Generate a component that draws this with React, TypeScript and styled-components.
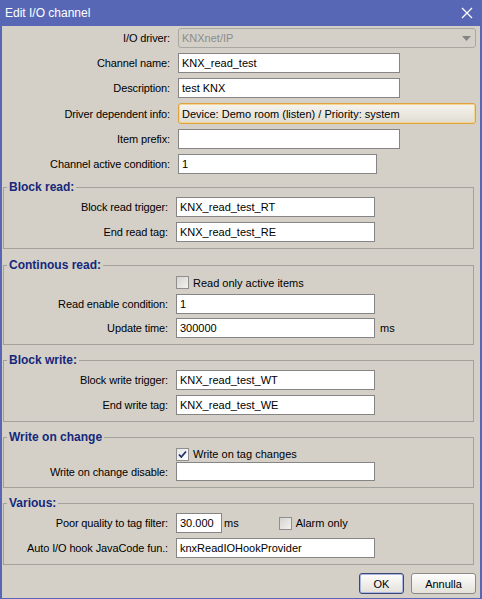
import React from "react";
import styled, { createGlobalStyle } from "styled-components";

const GlobalStyle = createGlobalStyle`
  html, body {
    margin: 0;
    padding: 0;
  }
  body {
    font-family: "Liberation Sans", Arial, sans-serif;
    font-size: 11px;
    color: #000;
    background: #d4d0c8;
  }
`;

const Window = styled.div`
  width: 482px;
  height: 599px;
  box-sizing: border-box;
  padding: 0 2px 2px 2px;
  background: #5767b5;
  display: flex;
  flex-direction: column;
`;

const TitleBar = styled.div`
  height: 25px;
  flex-shrink: 0;
  display: flex;
  align-items: center;
  padding: 0 7px 1px 3px;
  color: #fff;
  font-size: 12px;
`;

const Title = styled.span`
  flex: 1;
`;

const CloseButton = styled.button`
  width: 12px;
  height: 12px;
  padding: 0;
  border: none;
  background: none;
  display: flex;
  cursor: pointer;
`;

const Body = styled.div`
  flex: 1;
  background: #d4d0c8;
  padding: 2px 4px 4px 0;
  display: flex;
  flex-direction: column;
`;

const Stack = styled.div<{ $gap?: number }>`
  display: flex;
  flex-direction: column;
  gap: ${(p) => p.$gap ?? 5}px;
`;

const Row = styled.div<{ $h?: number }>`
  display: flex;
  align-items: center;
  height: ${(p) => p.$h ?? 20}px;
`;

const Label = styled.label<{ $w: number }>`
  width: ${(p) => p.$w}px;
  flex-shrink: 0;
  box-sizing: border-box;
  padding-right: 8px;
  text-align: right;
  white-space: nowrap;
  letter-spacing: -0.12px;
`;

const TextInput = styled.input<{ $w?: number; $h?: number }>`
  box-sizing: border-box;
  width: ${(p) => (p.$w ? `${p.$w}px` : "auto")};
  height: ${(p) => p.$h ?? 20}px;
  margin: 0;
  padding: 0 3px;
  border: 1px solid #858585;
  background: #fff;
  font-family: inherit;
  font-size: 11px;
  color: #000;
  outline: none;
`;

const Combo = styled.div`
  flex: 1;
  height: 20px;
  box-sizing: border-box;
  display: flex;
  align-items: center;
  padding: 0 4px 0 3px;
  border: 1px solid #a9a7a2;
  border-radius: 3px;
  color: #8c8c8c;
`;

const ComboText = styled.span`
  flex: 1;
`;

const InfoButton = styled.button`
  flex: 1;
  height: 21px;
  box-sizing: border-box;
  margin: 0;
  padding: 0 3px;
  text-align: left;
  font-family: inherit;
  font-size: 11px;
  color: #000;
  border: 1px solid #e0a23f;
  border-radius: 3px;
  background: linear-gradient(#f6f4ee, #e0dcd1);
  box-shadow: inset 0 0 0 1px #f5d592;
`;

const Group = styled.fieldset<{ $mt?: number }>`
  margin: ${(p) => p.$mt ?? 8}px 2px 0 1px;
  padding: 3px 0 6px 0;
  border: 1px solid #a3a19c;
  min-width: 0;
`;

const Legend = styled.legend`
  margin-left: 3px;
  padding: 0 2px;
  font-size: 12px;
  line-height: 14px;
  font-weight: bold;
  color: #15287c;
`;

const Unit = styled.span<{ $ml: number }>`
  margin-left: ${(p) => p.$ml}px;
`;

const CheckLabel = styled.label<{ $ml?: number }>`
  display: flex;
  align-items: center;
  gap: 4px;
  margin-left: ${(p) => p.$ml ?? 0}px;
`;

const CheckBox = styled.span<{ $checked?: boolean }>`
  width: 13px;
  height: 13px;
  box-sizing: border-box;
  border: 1px solid #8f8f8f;
  display: flex;
  align-items: center;
  justify-content: center;
  background: ${(p) =>
    p.$checked
      ? "linear-gradient(135deg, #e6e6e6, #ffffff)"
      : "linear-gradient(135deg, #d6d4cf, #f3f2ef)"};
`;

const ButtonBar = styled.div`
  margin-top: 8px;
  display: flex;
  justify-content: flex-end;
  gap: 7px;
`;

const DialogButton = styled.button<{ $w: number; $default?: boolean }>`
  width: ${(p) => p.$w}px;
  height: 21px;
  box-sizing: border-box;
  margin: 0;
  padding: 0;
  font-family: inherit;
  font-size: 11px;
  color: #000;
  border: 1px solid ${(p) => (p.$default ? "#3b4774" : "#8a8984")};
  border-radius: 3px;
  background: linear-gradient(#fdfdfc, #e4e1da);
  box-shadow: ${(p) => (p.$default ? "inset 0 0 0 1px #a9b6e0" : "none")};
`;

const TOP_W = 176;
const IN_W = 172;

function Check({ checked }: { checked?: boolean }) {
  return (
    <CheckBox $checked={checked}>
      {checked && (
        <svg width="9" height="9" viewBox="0 0 9 9">
          <path d="M1 4.5 L3.3 7 L8 1.5" fill="none" stroke="#1f2f6e" strokeWidth="1.8" />
        </svg>
      )}
    </CheckBox>
  );
}

function Field({
  label,
  value,
  labelW = IN_W,
  w = 199,
  h,
  children,
}: {
  label: string;
  value: string;
  labelW?: number;
  w?: number;
  h?: number;
  children?: React.ReactNode;
}) {
  return (
    <Row $h={h}>
      <Label $w={labelW}>{label}</Label>
      <TextInput $w={w} $h={h} value={value} readOnly />
      {children}
    </Row>
  );
}

export default function App() {
  return (
    <>
      <GlobalStyle />
      <Window>
        <TitleBar>
          <Title>Edit I/O channel</Title>
          <CloseButton aria-label="Close">
            <svg width="12" height="12" viewBox="0 0 12 12">
              <path d="M1 1 L11 11 M11 1 L1 11" stroke="#fff" strokeWidth="1.3" />
            </svg>
          </CloseButton>
        </TitleBar>
        <Body>
          <Stack>
            <Row>
              <Label $w={TOP_W}>I/O driver:</Label>
              <Combo>
                <ComboText>KNXnet/IP</ComboText>
                <svg width="9" height="5" viewBox="0 0 9 5">
                  <path d="M0 0 H9 L4.5 5 Z" fill="#858585" />
                </svg>
              </Combo>
            </Row>
            <Field label="Channel name:" value="KNX_read_test" labelW={TOP_W} w={222} />
            <Field label="Description:" value="test KNX" labelW={TOP_W} w={222} />
            <Row $h={21}>
              <Label $w={TOP_W}>Driver dependent info:</Label>
              <InfoButton>Device: Demo room (listen) / Priority: system</InfoButton>
            </Row>
            <Field label="Item prefix:" value="" labelW={TOP_W} w={222} />
            <Field label="Channel active condition:" value="1" labelW={TOP_W} />
          </Stack>

          <Group $mt={6}>
            <Legend>Block read:</Legend>
            <Stack>
              <Field label="Block read trigger:" value="KNX_read_test_RT" />
              <Field label="End read tag:" value="KNX_read_test_RE" />
            </Stack>
          </Group>

          <Group $mt={9}>
            <Legend>Continous read:</Legend>
            <Stack $gap={4}>
              <Row $h={15}>
                <Label $w={IN_W} />
                <CheckLabel>
                  <Check />
                  Read only active items
                </CheckLabel>
              </Row>
              <Field label="Read enable condition:" value="1" />
              <Field label="Update time:" value="300000">
                <Unit $ml={5}>ms</Unit>
              </Field>
            </Stack>
          </Group>

          <Group>
            <Legend>Block write:</Legend>
            <Stack>
              <Field label="Block write trigger:" value="KNX_read_test_WT" />
              <Field label="End write tag:" value="KNX_read_test_WE" />
            </Stack>
          </Group>

          <Group>
            <Legend>Write on change</Legend>
            <Stack $gap={1}>
              <Row $h={14}>
                <Label $w={IN_W} />
                <CheckLabel>
                  <Check checked />
                  Write on tag changes
                </CheckLabel>
              </Row>
              <Field label="Write on change disable:" value="" h={19} />
            </Stack>
          </Group>

          <Group>
            <Legend>Various:</Legend>
            <Stack>
              <Field label="Poor quality to tag filter:" value="30.000" w={46}>
                <Unit $ml={2}>ms</Unit>
                <CheckLabel $ml={40}>
                  <Check />
                  Alarm only
                </CheckLabel>
              </Field>
              <Field label="Auto I/O hook JavaCode fun.:" value="knxReadIOHookProvider" />
            </Stack>
          </Group>

          <ButtonBar>
            <DialogButton $w={45} $default>
              OK
            </DialogButton>
            <DialogButton $w={65}>Annulla</DialogButton>
          </ButtonBar>
        </Body>
      </Window>
    </>
  );
}
